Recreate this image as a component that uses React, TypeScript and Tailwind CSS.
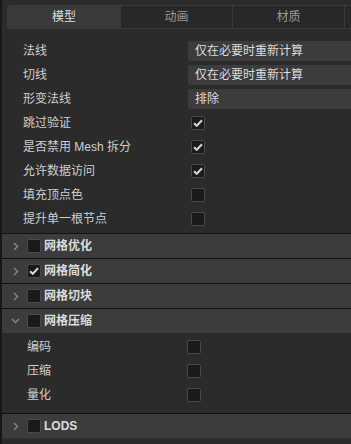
import React from "react";

const font = { fontFamily: '"Liberation Sans", "Noto Sans CJK SC", sans-serif' };

const selectRows = [
  { label: "法线", value: "仅在必要时重新计算" },
  { label: "切线", value: "仅在必要时重新计算" },
  { label: "形变法线", value: "排除" },
];

const checkRows = [
  { label: "跳过验证", checked: true },
  { label: "是否禁用 Mesh 拆分", checked: true },
  { label: "允许数据访问", checked: true },
  { label: "填充顶点色", checked: false },
  { label: "提升单一根节点", checked: false },
];

const sections = [
  { name: "网格优化", checked: false, open: false },
  { name: "网格简化", checked: true, open: false },
  { name: "网格切块", checked: false, open: false },
  { name: "网格压缩", checked: false, open: true },
];

const subRows = ["编码", "压缩", "量化"];

function Check({ checked }: { checked?: boolean }) {
  return (
    <div className="flex h-[14px] w-[14px] items-center justify-center rounded-[2px] border border-[#4a4a4a] bg-[#1a1a1a]">
      {checked && (
        <svg width="10" height="8" viewBox="0 0 10 8">
          <path d="M1 4.2 L3.8 6.8 L9 1.2" fill="none" stroke="#d6d6d6" strokeWidth="2" />
        </svg>
      )}
    </div>
  );
}

function Chevron({ open }: { open?: boolean }) {
  return open ? (
    <svg width="9" height="6" viewBox="0 0 9 6">
      <path d="M1 1 L4.5 4.5 L8 1" fill="none" stroke="#8a8a8a" strokeWidth="1.3" />
    </svg>
  ) : (
    <svg width="6" height="9" viewBox="0 0 6 9">
      <path d="M1 1 L4.5 4.5 L1 8" fill="none" stroke="#8a8a8a" strokeWidth="1.3" />
    </svg>
  );
}

function SectionHeader({ name, checked, open }: { name: string; checked?: boolean; open?: boolean }) {
  return (
    <div className="flex h-[25px] items-center border-t border-[#111] bg-[#3c3c3c]">
      <div className="flex w-[25px] justify-center pl-[2px]">
        <Chevron open={open} />
      </div>
      <Check checked={checked} />
      <span className="ml-[3px] text-[12px] font-bold text-[#dcdcdc]">{name}</span>
    </div>
  );
}

export default function App() {
  return (
    <div className="flex h-[444px] w-[351px] overflow-hidden bg-[#2b2b2b]" style={font}>
      <div className="w-[2px] shrink-0 bg-[#19171b]" />
      <div className="flex min-w-0 flex-1 flex-col">
        {/* tabs */}
        <div className="pl-[5px] pt-[5px]">
          <div className="flex h-[24px] w-[460px] overflow-hidden rounded-[3px] border border-[#3b3b3b] bg-[#282828] text-[12px]">
            <div className="flex w-[112px] items-center justify-center bg-[#3a3a3a] text-[#dedede]">模型</div>
            <div className="flex w-[112px] items-center justify-center border-l border-[#3b3b3b] text-[#9a9a9a]">动画</div>
            <div className="flex w-[112px] items-center justify-center border-l border-[#3b3b3b] text-[#9a9a9a]">材质</div>
            <div className="flex w-[112px] items-center justify-center border-l border-[#3b3b3b] text-[#9a9a9a]"></div>
          </div>
        </div>

        {/* props */}
        <div className="pl-[21px] pt-[10px] pb-[2px]">
          {selectRows.map((r) => (
            <div key={r.label} className="flex h-[24px] items-center">
              <span className="w-[165px] shrink-0 text-[12px] text-[#cfcfcf]">{r.label}</span>
              <div className="-mr-[20px] flex h-[20px] flex-1 items-center rounded-[3px] bg-[#3c3c3c] pl-[7px] text-[12px] text-[#dcdcdc]">
                {r.value}
              </div>
            </div>
          ))}
          {checkRows.map((r) => (
            <div key={r.label} className="flex h-[24px] items-center">
              <span className="w-[168px] shrink-0 text-[12px] text-[#cfcfcf]">{r.label}</span>
              <Check checked={r.checked} />
            </div>
          ))}
        </div>

        {sections.map((s) => (
          <SectionHeader key={s.name} {...s} />
        ))}
        <div className="bg-[#2b2b2b] pl-[25px] pt-[2px] pb-[6px]">
          {subRows.map((l) => (
            <div key={l} className="flex h-[24px] items-center">
              <span className="w-[160px] shrink-0 text-[12px] text-[#cfcfcf]">{l}</span>
              <Check />
            </div>
          ))}
        </div>
        <SectionHeader name="LODS" />
        <div className="flex-1 border-t border-[#333] bg-[#2b2b2b]" />
      </div>
    </div>
  );
}
